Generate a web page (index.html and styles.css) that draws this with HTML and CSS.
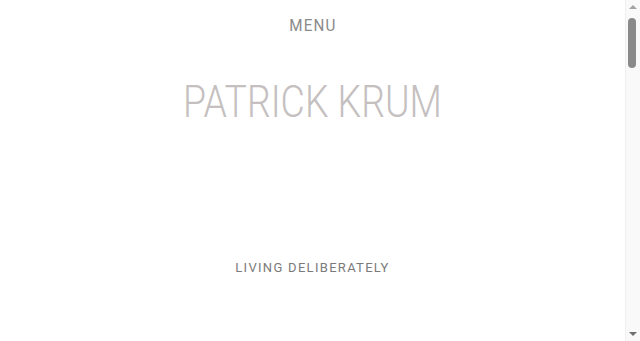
FILE: index.html
```html
<!DOCTYPE html>
<html>
  <head>
    <meta charset="utf-8">
    <meta name="viewport" content="width=device-width, initial-scale=1">
    <title>Patrick Krum</title>
    <link rel="stylesheet" href="styles.css">
  </head>
  <body>
    <div class="page">
      <div class="header">
        <a class="menu" href="#">MENU</a>
      </div>
      <div class="hero">
        <h1 class="title">PATRICK KRUM</h1>
        <div class="tagline">LIVING DELIBERATELY</div>
      </div>
    </div>
    <div class="scrollbar">
      <div class="arrow up"></div>
      <div class="thumb"></div>
      <div class="arrow down"></div>
    </div>
  </body>
</html>
```

FILE: styles.css
```css
html, body {
  overflow: hidden;
}
body {
  margin: 0;
  background: #fff;
  font-family: Roboto, "Noto Sans", sans-serif;
  text-align: center;
}
.page {
  margin-right: 15px;
  height: 341px;
}
.header {
  padding-top: 16px;
}
.menu {
  display: inline-block;
  color: #8a8a8a;
  text-decoration: none;
  font-size: 16px;
  line-height: 17px;
  letter-spacing: 1.2px;
  transform: scaleX(0.95);
}
.hero {
  padding-top: 45px;
}
.title {
  margin: 0;
  font-weight: 300;
  font-size: 44px;
  line-height: 44px;
  color: #c5bfc0;
  transform: scaleX(0.85);
}
.tagline {
  margin-top: 137px;
  font-size: 13px;
  line-height: 14px;
  letter-spacing: 1.3px;
  color: #7a7a7a;
}
.scrollbar {
  position: fixed;
  top: 0;
  right: 0;
  width: 15px;
  height: 100%;
  background: #f9f9f9;
  border-left: 1px solid #f0f0f0;
  box-sizing: border-box;
}
.arrow {
  position: absolute;
  left: 3px;
  width: 0;
  height: 0;
  border-left: 4px solid transparent;
  border-right: 4px solid transparent;
}
.up {
  top: 5px;
  border-bottom: 4px solid #a3a3a3;
}
.down {
  bottom: 5px;
  border-top: 4px solid #6e6e6e;
}
.thumb {
  position: absolute;
  top: 18px;
  left: 2px;
  width: 8px;
  height: 50px;
  border-radius: 4px;
  background: #8a8a8a;
}
```
